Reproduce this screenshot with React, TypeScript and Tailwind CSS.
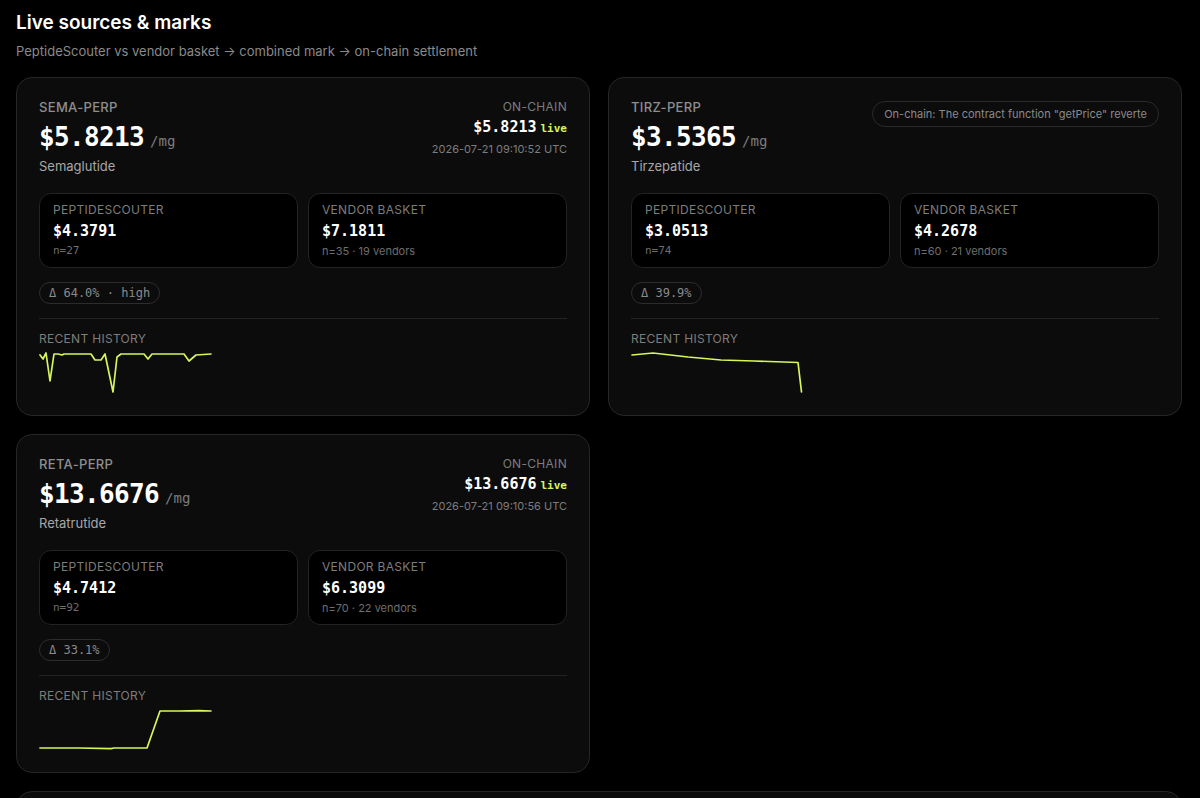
type Source = { label: string; value: string; meta: string; mono?: boolean };

type Market = {
  symbol: string;
  mark: string;
  name: string;
  onchain?: { price: string; time: string };
  error?: string;
  sources: Source[];
  delta: string;
  points: string;
};

const markets: Market[] = [
  {
    symbol: "SEMA-PERP",
    mark: "$5.8213",
    name: "Semaglutide",
    onchain: { price: "$5.8213", time: "2026-07-21 09:10:52 UTC" },
    sources: [
      { label: "PeptideScouter", value: "$4.3791", meta: "n=27", mono: true },
      { label: "Vendor basket", value: "$7.1811", meta: "n=35 · 19 vendors" },
    ],
    delta: "Δ 64.0% · high",
    points:
      "1,6 4,10 7,4 11,32 15,5 19,5 23,6 25,5 52,5 56,11 62,11 66,5 74,43 78,8 82,5 105,5 109,10 113,5 145,5 150,12 157,6 172,5",
  },
  {
    symbol: "TIRZ-PERP",
    mark: "$3.5365",
    name: "Tirzepatide",
    // the reference shows the revert message cut at the pill edge
    error: 'On-chain: The contract function "getPrice" reverte',
    sources: [
      { label: "PeptideScouter", value: "$3.0513", meta: "n=74", mono: true },
      { label: "Vendor basket", value: "$4.2678", meta: "n=60 · 21 vendors" },
    ],
    delta: "Δ 39.9%",
    points: "1,6 22,4 57,8 90,11 123,12 167,13.5 170.5,43",
  },
  {
    symbol: "RETA-PERP",
    mark: "$13.6676",
    name: "Retatrutide",
    onchain: { price: "$13.6676", time: "2026-07-21 09:10:56 UTC" },
    sources: [
      { label: "PeptideScouter", value: "$4.7412", meta: "n=92", mono: true },
      { label: "Vendor basket", value: "$6.3099", meta: "n=70 · 22 vendors" },
    ],
    delta: "Δ 33.1%",
    points: "1,42 40,42 72,42.6 75,42 108,42 121,5 140,5 160,4.6 172,5",
  },
];

const mono = { fontFamily: '"DejaVu Sans Mono", "Liberation Mono", monospace' };

function Sparkline({ points }: { points: string }) {
  return (
    <svg width="174" height="46" viewBox="0 0 174 46" className="mt-[2px] block">
      <polyline
        points={points}
        fill="none"
        stroke="#d6f65a"
        strokeWidth="1.7"
        strokeLinejoin="round"
        strokeLinecap="round"
      />
    </svg>
  );
}

function MarketCard({ m }: { m: Market }) {
  return (
    <div className="rounded-2xl border border-[#262628] bg-[#0c0c0d] px-[22px] pt-5 pb-5">
      <div className="flex items-start justify-between">
        <div>
          <div className="text-[13px] leading-[18px] font-medium tracking-wide text-[#8e8e8e]">{m.symbol}</div>
          <div className="mt-[2px] flex items-baseline gap-1.5 leading-[38px]">
            <span className="text-[26px] font-bold tracking-tight text-white" style={mono}>
              {m.mark}
            </span>
            <span className="text-sm text-[#7d7d7d]" style={mono}>
              /mg
            </span>
          </div>
          <div className="text-[13px] leading-5 text-[#a8a8a8]">{m.name}</div>
        </div>
        {m.onchain && (
          <div className="text-right">
            <div className="text-xs leading-[18px] tracking-wide text-[#7d7d7d]">ON-CHAIN</div>
            <div className="flex items-baseline justify-end gap-1 leading-[22px]">
              <span className="text-[15px] font-bold text-white" style={mono}>
                {m.onchain.price}
              </span>
              <span className="text-[11px] font-bold text-[#d6f65a]" style={mono}>
                live
              </span>
            </div>
            <div className="text-[11px] leading-[18px] text-[#7d7d7d]">{m.onchain.time}</div>
          </div>
        )}
        {m.error && (
          <div className="mt-[3px] whitespace-nowrap rounded-full border border-[#2a2a2c] px-[11px] text-[11px] leading-6 text-[#8a8a8a]">
            {m.error}
          </div>
        )}
      </div>

      <div className="mt-[17px] grid grid-cols-2 gap-2.5">
        {m.sources.map((s) => (
          <div key={s.label} className="rounded-xl border border-[#232325] bg-black px-[13px] pt-2 pb-2">
            <div className="text-xs leading-4 uppercase tracking-wide text-[#7d7d7d]">{s.label}</div>
            <div className="mt-px text-[15px] leading-6 font-bold text-white" style={mono}>
              {s.value}
            </div>
            <div className="text-[11px] leading-4 text-[#6e6e6e]" style={s.mono ? mono : undefined}>
              {s.meta}
            </div>
          </div>
        ))}
      </div>

      <div className="mt-3.5 flex">
        <span
          className="rounded-full border border-[#2c2c2e] px-[9px] text-xs leading-5 text-[#8a8a8a]"
          style={mono}
        >
          {m.delta}
        </span>
      </div>

      <div className="mt-[14px] border-t border-[#232325]" />
      <div className="mt-3 text-xs leading-4 tracking-wide text-[#7d7d7d]">RECENT HISTORY</div>
      <Sparkline points={m.points} />
    </div>
  );
}

export default function App() {
  return (
    <div
      className="min-h-screen bg-black pt-[9px] pl-4 pr-[18px] pb-10"
      style={{ fontFamily: 'Inter, "Liberation Sans", sans-serif' }}
    >
      <h1 className="text-[19px] leading-7 font-semibold text-white">Live sources &amp; marks</h1>
      <p className="mt-1 text-[13px] leading-5 text-[#8a8a8a]">
        PeptideScouter vs vendor basket → combined mark → on-chain settlement
      </p>

      <div className="mt-4 grid grid-cols-2 gap-[18px]">
        {markets.map((m) => (
          <MarketCard key={m.symbol} m={m} />
        ))}
      </div>

      <div className="mt-[18px] h-[220px] rounded-2xl border border-[#262628] bg-[#0c0c0d]" />
    </div>
  );
}
